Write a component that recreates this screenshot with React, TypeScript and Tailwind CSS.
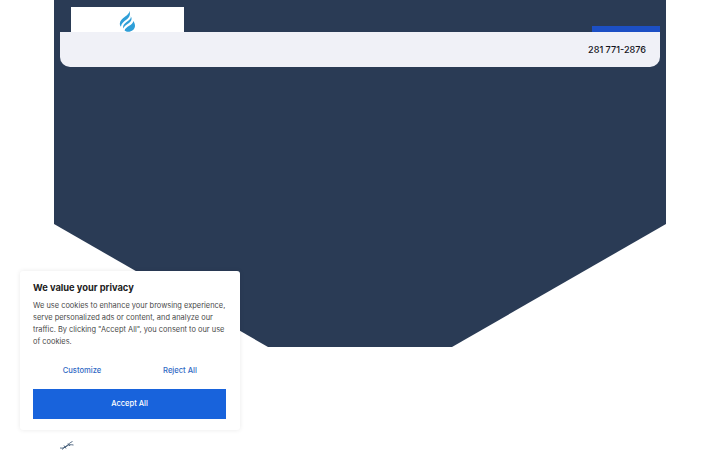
export default function App() {
  return (
    <div className="relative h-[450px] w-[720px] overflow-hidden bg-white font-['Inter',sans-serif]">
      <div className="mx-[54px] h-[347px] w-[612px] bg-[#2a3b55] px-[6px] pt-[7px] [clip-path:polygon(0_0,100%_0,100%_224px,398px_347px,214px_347px,0_224px)]">
        <div className="flex h-[25px] items-end justify-between pl-[11px]">
          <div className="flex h-[25px] w-[113px] items-start justify-center overflow-hidden bg-white pt-[3px]">
            <svg width="17" height="22" viewBox="0 0 17 22" fill="none">
              <path d="M10 0 C11.2 2.4 9.2 4.2 6.2 6.6 C3 9.2 0.8 11 0.8 13.8 C0.8 15 1.3 16 1.9 16.7 C2.2 13.6 4.8 11.6 7.6 9.6 C10.4 7.6 12.2 4.2 10 0Z" fill="#2f9fd8" />
              <path d="M11.8 6.2 C12.4 8.2 10.6 9.8 8.2 11.6 C5.6 13.6 3.6 15.4 4.2 18.4 C5 16.4 7.6 14.8 10 13 C12.4 11.2 13.4 8.6 11.8 6.2Z" fill="#2f9fd8" />
              <path d="M14.2 11 C14.4 12.8 12.6 14.2 10.2 15.8 C8 17.2 6 18.6 5.6 20.4 C6.6 21.3 7.8 21.8 9.1 21.8 C13 21.8 16 19.2 16 15.8 C16 14 15.3 12.4 14.2 11Z" fill="#2f9fd8" />
            </svg>
          </div>
          <div className="h-[6px] w-[68px] bg-[#1c4fc4]" />
        </div>
        <div className="flex h-[35px] items-center justify-end rounded-b-[10px] bg-[#f0f1f7] pr-[14px]">
          <span className="text-[9.1px] font-medium text-[#14141c]">281 771-2876</span>
        </div>
      </div>

      <div className="absolute left-[20px] top-[271px] flex h-[159px] w-[220px] flex-col rounded-[3px] bg-white px-[13px] pt-[11px] shadow-[0_0_5px_rgba(0,0,0,0.09)]">
        <h2 className="mb-[6px] text-[9.3px] font-bold leading-[12px] text-[#212121]">We value your privacy</h2>
        <p className="text-[7.45px] leading-[12px] text-[#4a4a4a]">
          We use cookies to enhance your browsing experience, serve personalized ads or content, and analyze our traffic. By clicking "Accept All", you consent to our use of cookies.
        </p>
        <div className="mt-[17px] flex h-[12px] items-center text-[7.6px] font-medium text-[#2f68c4]">
          <span className="w-[98px] shrink-0 text-center">Customize</span>
          <span className="w-[98px] shrink-0 text-center">Reject All</span>
        </div>
        <button className="mt-[12px] h-[30px] w-[193px] bg-[#1863dc] text-[7.5px] font-medium text-white">Accept All</button>
      </div>

      <svg className="absolute left-[60px] top-[441px]" width="14" height="9" viewBox="0 0 14 9" fill="none" stroke="#2f4a68" strokeWidth="0.8">
        <path d="M0 7 C3 7.5 5 6.5 7 5 C9 3.5 10.5 3.5 13.5 4" />
        <path d="M2 8.5 C4 7 5 5.5 7 4.5 C9 3 10 1.5 12.5 0.5" />
        <path d="M4 4.5 L6 7.5 M8 2.5 L10 5" />
      </svg>
    </div>
  );
}
